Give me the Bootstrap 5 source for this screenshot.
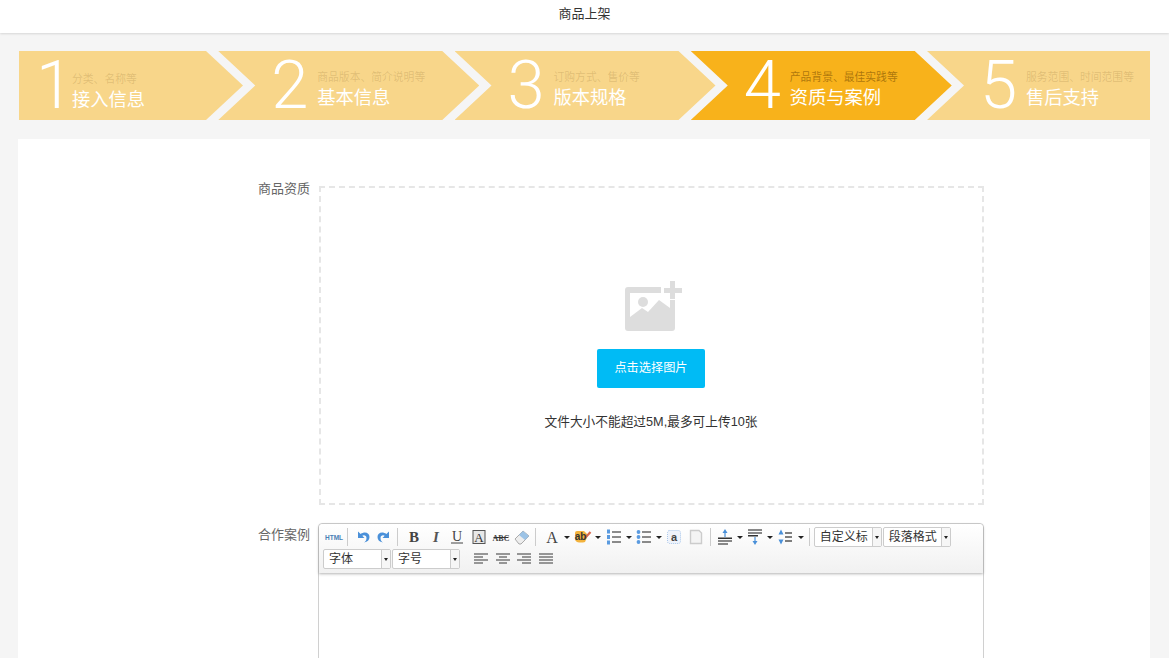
<!DOCTYPE html>
<html lang="zh-CN">
<head>
  <meta charset="UTF-8" />
  <meta name="viewport" content="width=device-width, initial-scale=1" />
  <title>商品上架</title>
  <link href="https://cdn.jsdelivr.net/npm/bootstrap@5.3.0/dist/css/bootstrap.min.css" rel="stylesheet" />
  <style>
    html, body { height: 100%; overflow: hidden; }
    body {
      background: #f5f5f5;
      font-family: "Liberation Sans", "Noto Sans CJK SC", sans-serif;
      font-size: 13px;
      color: #333;
    }
    .top-title {
      height: 33px;
      line-height: 28px;
      background: #fff;
      box-shadow: 0 1px 2px rgba(0,0,0,.12);
      text-align: center;
      font-size: 13px;
    }

    .steps { margin: 18px 19px 19px 19px; height: 69px; }
    .step {
      height: 69px;
      flex: none;
      width: 261px;
      margin-left: -24.75px;
      padding-left: 52px;
      background: #f8d68a;
      clip-path: polygon(0 0, 224px 0, 261px 50%, 224px 100%, 0 100%, 37px 50%);
      color: #fff;
    }
    .step:first-child {
      width: 224px;
      margin-left: 0;
      padding-left: 17px;
      clip-path: polygon(0 0, 187px 0, 224px 50%, 187px 100%, 0 100%);
    }
    .step:last-child {
      width: 223.25px;
      clip-path: polygon(0 0, 100% 0, 100% 100%, 0 100%, 37px 50%);
    }
    .step.now { background: #f8b21b; }
    .step-num {
      font-family: "Roboto", sans-serif;
      font-weight: 300;
      font-size: 67px;
      line-height: 69px;
      width: 39px;
      margin-right: 8px;
      flex: none;
      text-align: center;
    }
    .step:first-child .step-num { width: 36px; margin-right: 0; }
    .step-sub { font-size: 10.8px; line-height: 14px; color: rgba(120,90,30,.2); margin-top: 19px; white-space: nowrap; }
    .step.now .step-sub { color: rgba(110,70,0,.55); }
    .step-name { font-size: 18.3px; line-height: 24px; margin-top: 2px; white-space: nowrap; }
    .step:first-child .step-sub { margin-top: 21px; }

    .form-panel { margin: 0 19px 0 18px; background: #fff; padding: 47px 0 0 0; min-height: 900px; }
    .form-line { display: flex; }
    .form-label-text { width: 292px; flex: none; text-align: right; color: #666; line-height: 16px; margin-right: 9px; margin-top: -5px; }
    .form-label-text.beside-editor { margin-top: 4px; }

    .upload-box {
      width: 665px;
      height: 319px;
      border: 2px dashed #e6e6e6;
      margin-bottom: 18px;
      padding: 93px 1px 0 0;
    }
    .pic-icon { display: block; margin-left: 304px; }
    .pick-btn {
      width: 108px;
      height: 39px;
      margin: 18px 0 24px;
      background: #00bbf5;
      border: 0;
      border-radius: 2px;
      color: #fff;
      font-size: 12.2px;
      padding: 0;
    }
    .upload-tip { font-size: 12.7px; line-height: 20px; }

    .editor {
      width: 666px;
      margin-left: -1px;
      border: 1px solid #d0d0d0;
      border-radius: 4px 4px 0 0;
      height: 400px;
    }
    .ed-bar {
      height: 49px;
      padding: 2px 0 0 4px;
      background: linear-gradient(#fff, #f1f1f1);
      box-shadow: 0 1px 3px rgba(0,0,0,.3);
      border-radius: 4px 4px 0 0;
    }
    .ed-row { height: 22px; }
    .ed-btn { width: 20px; height: 20px; margin: 0 .85px; flex: none; display: block; }
    .ed-split { width: 30.7px; height: 20px; flex: none; padding-left: 2px; }
    .ed-split .ed-btn { margin: 0; }
    .ed-caret { width: 0; height: 0; border: 3px solid transparent; border-top: 3px solid #222; border-bottom: 0; margin-left: 2px; }
    .ed-sep { width: 1px; height: 18px; background: #ccc; margin: 0 4px 0 2px; flex: none; }
    .ed-sep.wide { margin-right: 5px; }
    .ed-sep.tight { margin-right: 2px; margin-left: 3px; }
    .ed-sep.last { margin: 0 4px 0 4px; }
    .ed-btn.nudge { margin-left: 1.3px; }
    .ed-combo {
      height: 20px;
      border: 1px solid #ccc;
      border-radius: 2px;
      background: #fff;
      flex: none;
      display: flex;
      font-size: 12px;
      line-height: 19px;
      color: #333;
    }
    .ed-combo span:first-child { width: 57px; padding-left: 5px; }
    .ed-combo span:last-child {
      width: 9px;
      border-left: 1px solid #ccc;
      background: #f6f6f6;
      display: flex;
      align-items: center;
      justify-content: center;
    }
    .ed-combo .ed-caret { margin-left: 0; border-width: 3px 2.5px 0; }
    .ed-combo + .ed-combo { margin-left: 1px; }
    .ed-btn.after-combos { margin-left: 11px; }
  </style>
</head>
<body>
  <div class="top-title">商品上架</div>

  <div class="steps d-flex">
    <div class="step d-flex">
      <div class="step-num">1</div>
      <div><div class="step-sub">分类、名称等</div><div class="step-name">接入信息</div></div>
    </div>
    <div class="step d-flex">
      <div class="step-num">2</div>
      <div><div class="step-sub">商品版本、简介说明等</div><div class="step-name">基本信息</div></div>
    </div>
    <div class="step d-flex">
      <div class="step-num">3</div>
      <div><div class="step-sub">订购方式、售价等</div><div class="step-name">版本规格</div></div>
    </div>
    <div class="step now d-flex">
      <div class="step-num">4</div>
      <div><div class="step-sub">产品背景、最佳实践等</div><div class="step-name">资质与案例</div></div>
    </div>
    <div class="step d-flex">
      <div class="step-num">5</div>
      <div><div class="step-sub">服务范围、时间范围等</div><div class="step-name">售后支持</div></div>
    </div>
  </div>

  <div class="form-panel">
    <div class="form-line">
      <div class="form-label-text">商品资质</div>
      <div class="upload-box text-center">
        <svg class="pic-icon" width="57" height="50" viewBox="0 0 57 50">
          <rect x="0" y="6" width="50" height="44" rx="3" fill="#ddd"/>
          <rect x="5" y="12" width="40" height="26" fill="#fff"/>
          <path d="M5 36 L17 27 L23 31 L34 19 L45 27 V40 H5 Z" fill="#ddd"/>
          <circle cx="18" cy="21" r="5" fill="#ddd"/>
          <rect x="36" y="0" width="21" height="19" fill="#fff"/>
          <rect x="45" y="0" width="5" height="18" fill="#ddd"/>
          <rect x="39" y="7" width="18" height="5" fill="#ddd"/>
        </svg>
        <button type="button" class="btn pick-btn">点击选择图片</button>
        <div class="upload-tip">文件大小不能超过5M,最多可上传10张</div>
      </div>
    </div>

    <div class="form-line">
      <div class="form-label-text beside-editor">合作案例</div>
      <div class="editor">
        <div class="ed-bar">
          <div class="ed-row d-flex align-items-center">
            <svg class="ed-btn" viewBox="0 0 20 20"><text x="10" y="12.5" text-anchor="middle" font-size="6.5" font-weight="700" fill="#4a7fb5" font-family="Liberation Sans">HTML</text></svg>
            <div class="ed-sep"></div>
            <svg class="ed-btn" viewBox="0 0 20 20"><path d="M5 4.5 V11 H11.5 L9.3 8.8 C11 7.6 13.5 8.6 13.5 11 C13.5 13 12.5 14.5 11 15.5 C14.5 15 16.5 13 16.5 10 C16.5 5.5 11.5 4 7.6 7 Z" fill="#4a90d9"/></svg>
            <svg class="ed-btn" viewBox="0 0 20 20"><path d="M15 4.5 V11 H8.5 L10.7 8.8 C9 7.6 6.5 8.6 6.5 11 C6.5 13 7.5 14.5 9 15.5 C5.5 15 3.5 13 3.5 10 C3.5 5.5 8.5 4 12.4 7 Z" fill="#4a90d9"/></svg>
            <div class="ed-sep wide"></div>
            <svg class="ed-btn" viewBox="0 0 20 20"><text x="10" y="15" text-anchor="middle" font-size="15" font-weight="700" fill="#444" font-family="Liberation Serif">B</text></svg>
            <svg class="ed-btn" viewBox="0 0 20 20"><text x="10" y="15" text-anchor="middle" font-size="15" font-weight="700" font-style="italic" fill="#555" font-family="Liberation Serif">I</text></svg>
            <svg class="ed-btn" viewBox="0 0 20 20"><text x="10" y="14" text-anchor="middle" font-size="14" fill="#444" font-family="Liberation Serif">U</text><rect x="4" y="15.5" width="12" height="1" fill="#444"/></svg>
            <svg class="ed-btn" viewBox="0 0 20 20"><rect x="4" y="3.5" width="12" height="13" fill="#e8e8e8" stroke="#555"/><text x="10" y="14.5" text-anchor="middle" font-size="13" fill="#333" font-family="Liberation Serif">A</text></svg>
            <svg class="ed-btn" viewBox="0 0 20 20"><text x="10" y="13.5" text-anchor="middle" font-size="8" font-weight="700" fill="#444" font-family="Liberation Serif">ABC</text><rect x="2.5" y="10" width="15" height="1" fill="#333"/></svg>
            <svg class="ed-btn" viewBox="0 0 20 20"><path d="M3 12 L11 4 L17 9 L9 17 H7 Z" fill="#eee" stroke="#aaa"/><path d="M11 4 L17 9 L13 13 L7 8 Z" fill="#9cc3e6"/></svg>
            <div class="ed-sep"></div>
            <div class="ed-split d-flex align-items-center">
              <svg class="ed-btn" viewBox="0 0 20 20"><text x="10" y="15.5" text-anchor="middle" font-size="16" fill="#444" font-family="Liberation Serif">A</text></svg><div class="ed-caret"></div>
            </div>
            <div class="ed-split d-flex align-items-center">
              <svg class="ed-btn" viewBox="0 0 20 20"><path d="M2 6 Q2 4 4 4 H11 L15 8 L12 15 Q8 16 4 15 Q2 14 2 12 Z" fill="#f3b33d"/><path d="M12 11 L17.5 5" stroke="#d9694f" stroke-width="2.2"/><text x="7.5" y="13" text-anchor="middle" font-size="10" font-weight="700" fill="#333" font-family="Liberation Sans">ab</text></svg><div class="ed-caret"></div>
            </div>
            <div class="ed-split d-flex align-items-center">
              <svg class="ed-btn" viewBox="0 0 20 20"><path d="M3 2.5 h3 v4 h-3 z M3 8 h3 v4 h-3 z M3 13.5 h3 v4 h-3 z" fill="#5b9be0"/><path d="M8 5 H17 M8 10 H17 M8 15 H17" stroke="#666" stroke-width="1.7"/></svg><div class="ed-caret"></div>
            </div>
            <div class="ed-split d-flex align-items-center">
              <svg class="ed-btn" viewBox="0 0 20 20"><circle cx="4.5" cy="5" r="1.9" fill="#5b9be0"/><circle cx="4.5" cy="10" r="1.9" fill="#5b9be0"/><circle cx="4.5" cy="15" r="1.9" fill="#5b9be0"/><path d="M8 5 H17 M8 10 H17 M8 15 H17" stroke="#666" stroke-width="1.7"/></svg><div class="ed-caret"></div>
            </div>
            <svg class="ed-btn nudge" viewBox="0 0 20 20"><rect x="3.5" y="3.5" width="13" height="13" rx="2" fill="#eef3fb" stroke="#a9c6ea" stroke-dasharray="1 1"/><text x="10" y="14" text-anchor="middle" font-size="11" font-weight="700" fill="#444" font-family="Liberation Sans">a</text></svg>
            <svg class="ed-btn" viewBox="0 0 20 20"><path d="M4.5 3.5 H13 L15.5 6 V16.5 H4.5 Z" fill="#f4f4f4" stroke="#ccc" stroke-width="1.4"/></svg>
            <div class="ed-sep tight"></div>
            <div class="ed-split d-flex align-items-center">
              <svg class="ed-btn" viewBox="0 0 20 20"><path d="M10 2 L12.5 6 H7.5 Z M9.4 6 h1.2 v4 h-1.2 z" fill="#4a90d9"/><rect x="3" y="10.5" width="14" height="1.5" fill="#333"/><rect x="3" y="13" width="14" height="2" fill="#888"/><rect x="3" y="16" width="10" height="2" fill="#888"/></svg><div class="ed-caret"></div>
            </div>
            <div class="ed-split d-flex align-items-center">
              <svg class="ed-btn" viewBox="0 0 20 20"><rect x="3" y="2" width="14" height="2" fill="#888"/><rect x="3" y="5" width="14" height="2" fill="#888"/><rect x="3" y="8" width="10" height="1.5" fill="#333"/><path d="M10 18 L12.5 14 H7.5 Z M9.4 10 h1.2 v4 h-1.2 z" fill="#4a90d9"/></svg><div class="ed-caret"></div>
            </div>
            <div class="ed-split d-flex align-items-center">
              <svg class="ed-btn" viewBox="0 0 20 20"><path d="M5 2.5 L7.5 7.5 H2.5 Z M5 17.5 L7.5 12.5 H2.5 Z" fill="#4a90d9"/><path d="M9 6 H16 M9 10 H16 M9 14 H16" stroke="#555" stroke-width="1.5"/></svg><div class="ed-caret"></div>
            </div>
            <div class="ed-sep last"></div>
            <div class="ed-combo"><span>自定义标</span><span><i class="ed-caret"></i></span></div>
            <div class="ed-combo"><span>段落格式</span><span><i class="ed-caret"></i></span></div>
          </div>
          <div class="ed-row d-flex align-items-center">
            <div class="ed-combo"><span>字体</span><span><i class="ed-caret"></i></span></div>
            <div class="ed-combo"><span>字号</span><span><i class="ed-caret"></i></span></div>
            <svg class="ed-btn after-combos" viewBox="0 0 20 20"><path d="M3 5 H17 M3 8 H12 M3 11 H17 M3 14 H12" stroke="#777" stroke-width="1.4"/></svg>
            <svg class="ed-btn" viewBox="0 0 20 20"><path d="M3 5 H17 M6 8 H14 M3 11 H17 M6 14 H14" stroke="#777" stroke-width="1.4"/></svg>
            <svg class="ed-btn" viewBox="0 0 20 20"><path d="M3 5 H17 M8 8 H17 M3 11 H17 M8 14 H17" stroke="#777" stroke-width="1.4"/></svg>
            <svg class="ed-btn" viewBox="0 0 20 20"><path d="M3 5 H17 M3 8 H17 M3 11 H17 M3 14 H17" stroke="#777" stroke-width="1.4"/></svg>
          </div>
        </div>
      </div>
    </div>
  </div>

  <script src="https://cdn.jsdelivr.net/npm/bootstrap@5.3.0/dist/js/bootstrap.bundle.min.js"></script>
</body>
</html>
